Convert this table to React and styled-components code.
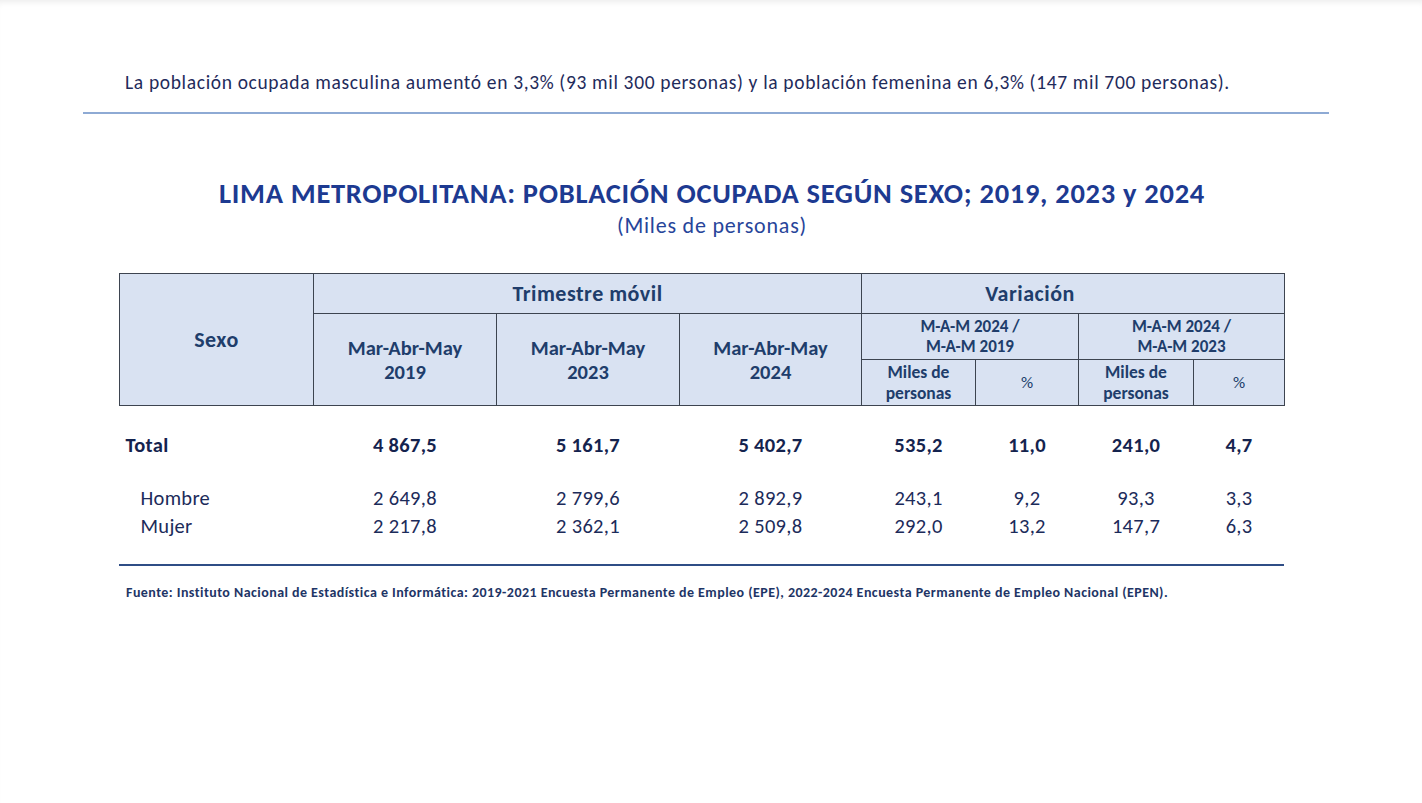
import React from 'react'
import styled, { createGlobalStyle } from 'styled-components'

const GlobalStyle = createGlobalStyle`
  html, body {
    margin: 0;
    padding: 0;
    background: #ffffff;
  }
  body {
    font-family: Carlito, Lato, "Liberation Sans", sans-serif;
  }
`

const Slide = styled.div`
  position: relative;
  width: 1422px;
  height: 803px;
  background: #ffffff;
  box-shadow: inset 0 6px 6px -4px rgba(0, 0, 0, 0.08);
  overflow: hidden;
`

const Lead = styled.p`
  margin: 0;
  padding: 70px 0 0 125px;
  font-size: 19.5px;
  letter-spacing: 0.65px;
  line-height: 24px;
  color: #1f2b5b;
  white-space: nowrap;
`

const TopRule = styled.div`
  margin: 18px 0 0 83px;
  width: 1246px;
  height: 2px;
  background: #8eaad4;
`

const Heading = styled.div`
  display: flex;
  flex-direction: column;
  align-items: center;
  margin: 64px 0 0 0;
  padding-left: 2px;
`

const Title = styled.h1`
  margin: 0;
  font-size: 28.5px;
  letter-spacing: 0.7px;
  line-height: 32px;
  font-weight: 700;
  color: #1d3a91;
  white-space: nowrap;
`

const Subtitle = styled.div`
  margin-top: 3px;
  font-size: 22px;
  letter-spacing: 0.8px;
  line-height: 26px;
  color: #27459a;
`

const TableWrap = styled.div`
  margin: 34px 0 0 119px;
  width: 1165px;
`

const Table = styled.table`
  width: 1165px;
  border-collapse: collapse;
  table-layout: fixed;
`

const Head = styled.th`
  background: #d9e2f2;
  border: 1px solid #3d4450;
  color: #203d6b;
  text-align: center;
  vertical-align: middle;
  padding: 0 ${p => p.$pr || 0}px 0 0;
  font-size: ${p => p.$size || 18}px;
  letter-spacing: ${p => p.$ls || 0}px;
  line-height: ${p => p.$lh || 24}px;
  font-weight: ${p => (p.$light ? 400 : 700)};
  height: ${p => p.$h || 'auto'};
`

const Cell = styled.td`
  padding: 0;
  text-align: ${p => (p.$label ? 'left' : 'center')};
  padding-left: ${p => (p.$label ? (p.$indent ? '21px' : '6px') : '0')};
  font-size: 20.5px;
  letter-spacing: 0.3px;
  font-weight: ${p => (p.$bold ? 700 : 400)};
  color: ${p => (p.$bold ? '#14234e' : '#1c2b5a')};
  height: ${p => p.$h}px;
  line-height: 24px;
`

const BottomRule = styled.div`
  margin-top: 24px;
  height: 2px;
  background: #2f4d86;
`

const Source = styled.p`
  margin: 19px 0 0 126px;
  font-size: 14px;
  letter-spacing: 0.45px;
  font-weight: 700;
  color: #1e3566;
  line-height: 16px;
  white-space: nowrap;
`

const widths = [194, 183, 183, 182, 114, 103, 115, 91]

const rows = [
  { label: 'Total', bold: true, h: 78, values: ['4 867,5', '5 161,7', '5 402,7', '535,2', '11,0', '241,0', '4,7'] },
  { label: 'Hombre', h: 28, values: ['2 649,8', '2 799,6', '2 892,9', '243,1', '9,2', '93,3', '3,3'] },
  { label: 'Mujer', h: 28, values: ['2 217,8', '2 362,1', '2 509,8', '292,0', '13,2', '147,7', '6,3'] },
]

const App = () => {
  return (
    <>
      <GlobalStyle />
      <Slide>
        <Lead>
          La población ocupada masculina aumentó en 3,3% (93 mil 300 personas) y la población femenina en 6,3% (147 mil 700 personas).
        </Lead>
        <TopRule />

        <Heading>
          <Title>LIMA METROPOLITANA: POBLACIÓN OCUPADA SEGÚN SEXO; 2019, 2023 y 2024</Title>
          <Subtitle>(Miles de personas)</Subtitle>
        </Heading>

        <TableWrap>
          <Table>
            <colgroup>
              {widths.map((w, i) => (
                <col key={i} style={{ width: w }} />
              ))}
            </colgroup>
            <thead>
              <tr>
                <Head rowSpan={3} $size={22} $ls={0.5}>Sexo</Head>
                <Head colSpan={3} $size={22} $ls={0.5} $h="39px">Trimestre móvil</Head>
                <Head colSpan={4} $size={22} $ls={0.5} $pr={86}>Variación</Head>
              </tr>
              <tr>
                <Head rowSpan={2} $size={20.5}>Mar-Abr-May<br />2019</Head>
                <Head rowSpan={2} $size={20.5}>Mar-Abr-May<br />2023</Head>
                <Head rowSpan={2} $size={20.5}>Mar-Abr-May<br />2024</Head>
                <Head colSpan={2} $size={17} $lh={20} $h="45px">M-A-M 2024 /<br />M-A-M 2019</Head>
                <Head colSpan={2} $size={17} $lh={20}>M-A-M 2024 /<br />M-A-M 2023</Head>
              </tr>
              <tr>
                <Head $size={17.5} $lh={21} $h="45px">Miles de<br />personas</Head>
                <Head $size={17} $light>%</Head>
                <Head $size={17.5} $lh={21}>Miles de<br />personas</Head>
                <Head $size={17} $light>%</Head>
              </tr>
            </thead>
            <tbody>
              {rows.map(r => (
                <tr key={r.label}>
                  <Cell $label $indent={!r.bold} $bold={r.bold} $h={r.h}>{r.label}</Cell>
                  {r.values.map((v, i) => (
                    <Cell key={i} $bold={r.bold} $h={r.h}>{v}</Cell>
                  ))}
                </tr>
              ))}
            </tbody>
          </Table>
          <BottomRule />
        </TableWrap>

        <Source>
          Fuente: Instituto Nacional de Estadística e Informática: 2019-2021 Encuesta Permanente de Empleo (EPE), 2022-2024 Encuesta Permanente de Empleo Nacional (EPEN).
        </Source>
      </Slide>
    </>
  )
}

export default App
